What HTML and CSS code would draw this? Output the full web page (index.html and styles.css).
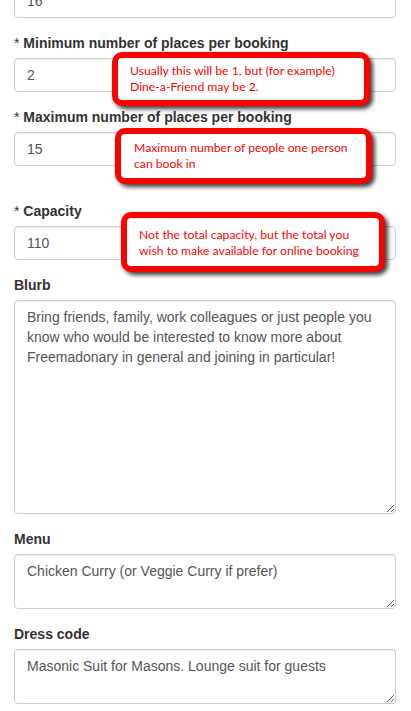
FILE: index.html
```html
<!DOCTYPE html>
<html>
<head>
<meta charset="utf-8">
<link rel="stylesheet" href="styles.css">
</head>
<body>
<form class="form">
  <div class="group">
    <input class="control" type="text" value="16">
  </div>
  <div class="group">
    <label class="label"><span class="req">*</span> Minimum number of places per booking</label>
    <input class="control" type="text" value="2">
  </div>
  <div class="group group-spaced">
    <label class="label"><span class="req">*</span> Maximum number of places per booking</label>
    <input class="control" type="text" value="15">
  </div>
  <div class="group">
    <label class="label"><span class="req">*</span> Capacity</label>
    <input class="control" type="text" value="110">
  </div>
  <div class="group">
    <label class="label">Blurb</label>
    <textarea class="control area area-tall">Bring friends, family, work colleagues or just people you know who would be interested to know more about Freemadonary in general and joining in particular!</textarea>
  </div>
  <div class="group">
    <label class="label">Menu</label>
    <textarea class="control area">Chicken Curry (or Veggie Curry if prefer)</textarea>
  </div>
  <div class="group">
    <label class="label">Dress code</label>
    <textarea class="control area">Masonic Suit for Masons. Lounge suit for guests</textarea>
  </div>
</form>

<div class="callout callout-1">Usually this will be 1, but (for example)<br>Dine-a-Friend may be 2.</div>
<div class="callout callout-2">Maximum number of people one person<br>can book in</div>
<div class="callout callout-3">Not the total capacity, but the total you<br>wish to make available for online booking</div>
</body>
</html>
```
FILE: styles.css
```css
html, body {
  margin: 0;
  padding: 0;
  background: #fff;
  overflow: hidden;
}
body {
  font-family: "Liberation Sans", Arial, sans-serif;
  font-size: 14px;
  line-height: 20px;
  color: #333;
  width: 411px;
  height: 711px;
  position: relative;
}
.form {
  margin-top: -16px;
  padding: 0 15px 0 14px;
}
.group {
  margin-bottom: 15px;
}
.group-spaced {
  margin-bottom: 35px;
}
.label {
  display: block;
  font-weight: bold;
  margin-bottom: 5px;
  height: 20px;
}
.req {
  font-weight: normal;
}
.control {
  display: block;
  box-sizing: border-box;
  width: 382px;
  height: 34px;
  padding: 6px 12px;
  margin: 0;
  font-family: "Liberation Sans", Arial, sans-serif;
  font-size: 14px;
  line-height: 20px;
  color: #555;
  background: #fff;
  border: 1px solid #ccc;
  border-radius: 4px;
  box-shadow: inset 0 1px 1px rgba(0,0,0,.075);
  outline: none;
}
.area {
  height: 55px;
  resize: vertical;
  overflow: hidden;
}
.area-tall {
  height: 214px;
}
.callout {
  position: absolute;
  box-sizing: border-box;
  background: #fff;
  border: 6px solid #ff0000;
  border-radius: 10px;
  box-shadow: 3px 3px 4px rgba(0,0,0,.75);
  color: #f00;
  font-family: Lato, "Noto Sans", sans-serif;
  font-size: 12.2px;
  line-height: 16px;
  padding: 5px 2px 0 12px;
  white-space: nowrap;
}
.callout-1 {
  left: 112px;
  top: 52px;
  width: 258px;
  height: 54px;
}
.callout-2 {
  left: 115px;
  top: 128px;
  width: 257px;
  height: 56px;
  padding-top: 6px;
  padding-left: 13px;
}
.callout-3 {
  left: 121px;
  top: 212px;
  width: 264px;
  height: 60px;
  padding-top: 9px;
  padding-left: 12px;
}
```
